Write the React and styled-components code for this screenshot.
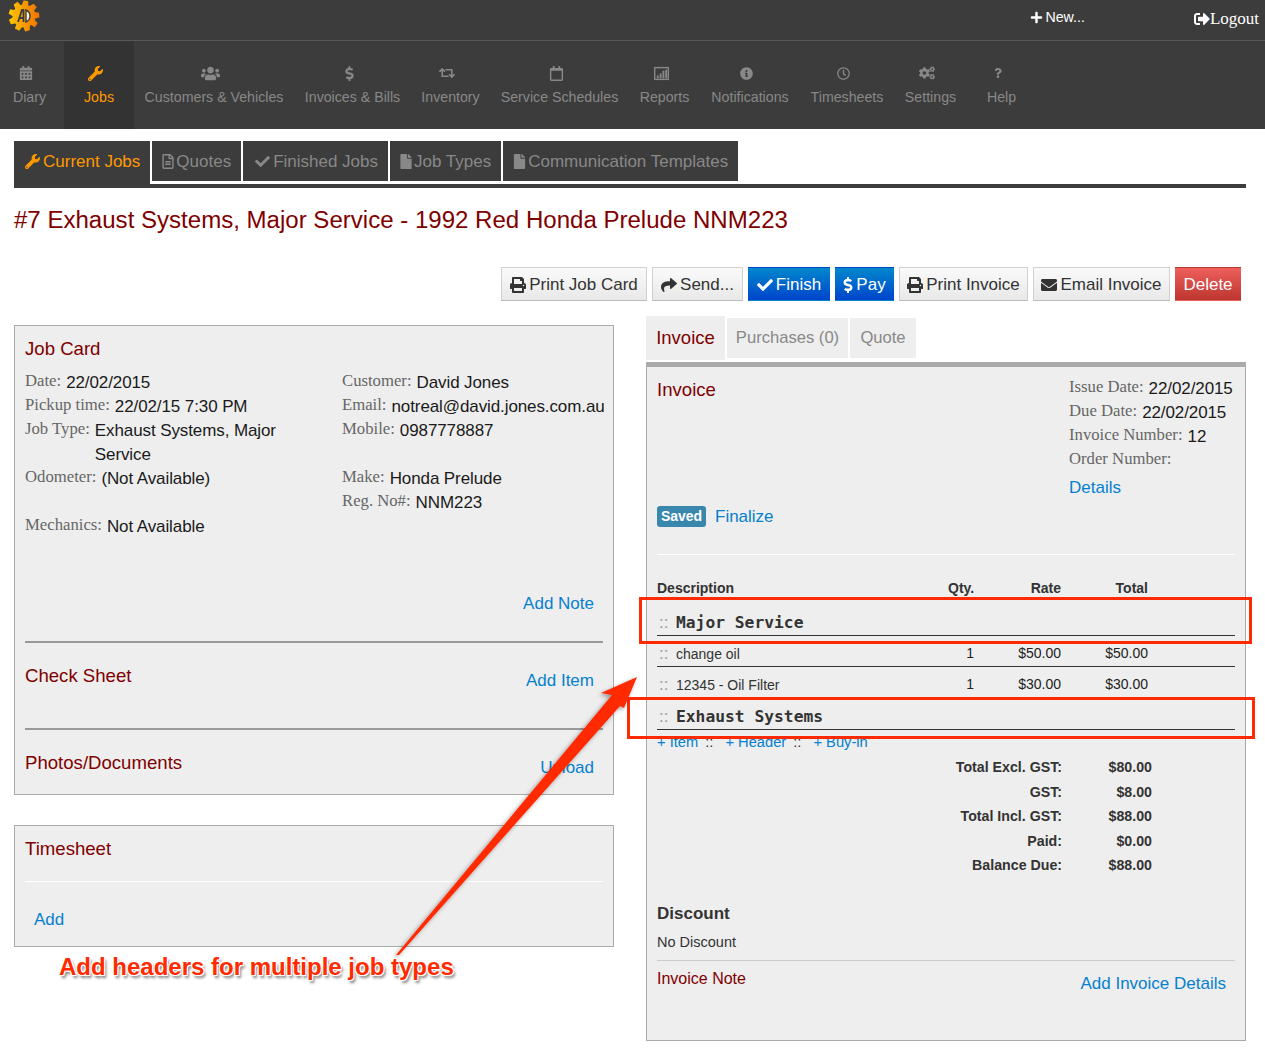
import styled, { createGlobalStyle } from "styled-components";
import {
  FaCalendarAlt, FaWrench, FaUsers, FaDollarSign, FaRetweet, FaRegCalendar,
  FaInfoCircle, FaRegClock, FaCogs, FaQuestion, FaRegFileAlt, FaCheck, FaFile, FaPlus,
  FaSignOutAlt, FaPrint, FaShare, FaEnvelope,
} from "react-icons/fa";

const GlobalStyle = createGlobalStyle`
  body {
    margin: 0;
    background: #fff;
    font-family: "Liberation Sans", Arial, sans-serif;
    color: #222;
  }
`;

const Page = styled.div`
  position: relative;
  width: 1265px;
  height: 1052px;
  overflow: hidden;
`;

const TopBar = styled.div`
  display: flex;
  align-items: center;
  height: 40px;
  padding-left: 8px;
  background: #3c3c3c;
  border-bottom: 1px solid #585858;
`;

const Logo = styled.svg`
  width: 32px;
  height: 32px;
  margin-top: -8px;
`;

const NewLink = styled.a`
  display: flex;
  align-items: center;
  gap: 2px;
  margin: -6px 109px 0 auto;
  color: #fff;
  font-size: 14.2px;
`;

const LogoutLink = styled.a`
  display: flex;
  align-items: center;
  margin-right: 6px;
  margin-top: -2px;
  color: #fff;
  font-family: "Liberation Serif", serif;
  font-size: 17px;
`;

const MainNav = styled.nav`
  display: flex;
  height: 88px;
  background: #3c3c3c;
`;

const NavItem = styled.a`
  display: flex;
  flex-direction: column;
  align-items: center;
  flex: none;
  width: ${(p) => p.$w}px;
  margin-left: ${(p) => p.$ml || 0}px;
  padding-top: 24px;
  box-sizing: border-box;
  white-space: nowrap;
  font-size: 14.2px;
  line-height: 20px;
  color: ${(p) => (p.$active ? "#f90" : "#888")};
  background: ${(p) => (p.$active ? "#333" : "transparent")};
`;

const NavIcon = styled.span`
  display: flex;
  align-items: center;
  justify-content: center;
  height: 16px;
  margin: 0 7px 6px 0;
`;

const Main = styled.main`
  padding: 12px 19px 0 14px;
`;

const SubTabs = styled.div`
  display: flex;
  gap: 2px;
  align-items: flex-start;
  height: 43px;
  border-bottom: 4px solid #3c3c3c;
`;

const SubTab = styled.a`
  display: flex;
  align-items: center;
  gap: 2px;
  height: ${(p) => (p.$active ? 43 : 40)}px;
  padding: 1px 10px ${(p) => (p.$active ? 3 : 0)}px;
  box-sizing: border-box;
  background: #3c3c3c;
  font-size: 17px;
  white-space: nowrap;
  color: ${(p) => (p.$active ? "#f90" : "#888")};
`;

const SubTabIcon = styled.span`
  display: flex;
  justify-content: center;
  width: ${(p) => p.$w}px;
`;

const PageTitle = styled.h1`
  margin: 17px 0 0;
  font-size: 24.06px;
  font-weight: 400;
  line-height: 30px;
  color: #800000;
`;

const ActionBar = styled.div`
  display: flex;
  justify-content: flex-end;
  gap: 5px;
  margin: 32px 5px 0 0;
`;

const ActionButton = styled.a`
  display: flex;
  align-items: center;
  justify-content: center;
  gap: 3px;
  width: ${(p) => p.$w}px;
  height: 34px;
  padding-top: 1px;
  box-sizing: border-box;
  font-size: 17px;
  white-space: nowrap;
  border: 1px solid ${(p) => (p.$tone ? "transparent" : "#d0d0d0")};
  border-bottom-color: ${(p) => (p.$tone ? "transparent" : "#bbb")};
  color: ${(p) => (p.$tone ? "#fff" : "#333")};
  background: ${(p) =>
    p.$tone === "primary"
      ? "linear-gradient(#0088cc, #0044cc)"
      : p.$tone === "danger"
      ? "linear-gradient(#ee5f5b, #bd362f)"
      : "linear-gradient(#fafafa, #e8e8e8)"};
`;

const ButtonIcon = styled.span`
  display: flex;
  justify-content: center;
  width: ${(p) => p.$w}px;
`;

const Columns = styled.div`
  display: grid;
  grid-template-columns: 600px 600px;
  gap: 32px;
  margin-top: 15px;
`;

const LeftColumn = styled.div`
  display: flex;
  flex-direction: column;
  gap: 30px;
  padding-top: 9px;
`;

const Card = styled.section`
  padding: 0 10px;
  background: #eee;
  border: 1px solid #aaa;
`;

const CardTitle = styled.h3`
  margin: 0;
  font-size: 18.6px;
  font-weight: 400;
  line-height: 24px;
  color: #800000;
`;

const Link = styled.a`
  font-size: 17px;
  line-height: 24px;
  color: #0580d0;
`;

const JobTitle = styled(CardTitle)`
  padding-top: 11px;
`;

const InfoGrid = styled.div`
  display: grid;
  grid-template-columns: 317px 1fr;
  margin-top: 9px;
`;

const InfoRow = styled.div`
  display: flex;
  gap: 5px;
  min-height: 24px;
  line-height: 24px;
  white-space: ${(p) => (p.$wrap ? "normal" : "nowrap")};
  margin-bottom: ${(p) => (p.$gap ? 24 : 0)}px;
`;

const Label = styled.span`
  flex: none;
  margin: -1px 0 1px;
  font-family: "Liberation Serif", serif;
  font-size: 16.7px;
  color: #666;
`;

const Value = styled.span`
  margin: 1px 0 -1px;
  font-size: 17px;
  letter-spacing: -0.1px;
  color: #1a1a1a;
  max-width: ${(p) => (p.$free ? "none" : "200px")};
  white-space: inherit;
`;

const NoteBar = styled.div`
  display: flex;
  justify-content: flex-end;
  margin-top: 54px;
  padding-right: 9px;
`;

const SectionRule = styled.hr`
  height: 2px;
  margin: ${(p) => (p.$flush ? 0 : 25)}px 0 0;
  border: 0;
  background: #999;
`;

const SectionRow = styled.div`
  display: flex;
  justify-content: space-between;
  align-items: flex-start;
  padding: 21px 9px 0 0;
  height: ${(p) => p.$h}px;
  box-sizing: border-box;
  ${Link} {
    margin-top: 5px;
  }
`;

const TimesheetRule = styled.hr`
  height: 1px;
  margin: 20px 0 0;
  border: 0;
  background: #fff;
`;

const TimesheetBody = styled.div`
  padding: 26px 0 14px 9px;
`;

const InvoiceTabs = styled.div`
  display: flex;
  align-items: center;
  gap: 2px;
  height: 44px;
`;

const InvoiceTab = styled.a`
  display: flex;
  align-items: center;
  justify-content: center;
  width: ${(p) => p.$w}px;
  height: ${(p) => (p.$active ? 44 : 40)}px;
  background: #eee;
  font-size: ${(p) => (p.$active ? 18.5 : 16.6)}px;
  white-space: nowrap;
  color: ${(p) => (p.$active ? "#800000" : "#888")};
`;

const InvoicePanel = styled.section`
  margin-top: 2px;
  padding: 0 10px 44px;
  background: #eee;
  border: 1px solid #aaa;
  border-top: 5px solid #aaa;
`;

const InvoiceHead = styled.div`
  display: flex;
  justify-content: space-between;
  padding-top: 9px;
`;

const InvoiceTitle = styled(CardTitle)`
  margin-top: 2px;
`;

const InvoiceMeta = styled.div`
  width: 166px;
`;

const DetailsLink = styled(Link)`
  display: block;
  margin-top: 4px;
`;

const StatusRow = styled.div`
  display: flex;
  align-items: center;
  gap: 9px;
  margin-top: 5px;
`;

const Badge = styled.span`
  display: flex;
  align-items: center;
  justify-content: center;
  width: 49px;
  height: 21px;
  margin-top: -2px;
  border-radius: 3px;
  background: #3a87ad;
  color: #fff;
  font-size: 14px;
  font-weight: 700;
`;

const LightRule = styled.hr`
  height: 1px;
  margin: 25px 0 0;
  border: 0;
  background: #fff;
`;

const LineGrid = styled.div`
  display: grid;
  grid-template-columns: 291px 26px 87px 87px 1fr;
  font-size: 14px;
  line-height: 20px;
  padding: ${(p) => p.$pad || "0"};
  border-bottom: ${(p) => (p.$rule ? "1px solid #333" : "0")};
  & > span:nth-child(n + 2) {
    text-align: right;
  }
`;

const HeadGrid = styled(LineGrid)`
  margin-top: 23px;
  font-weight: 700;
  color: #333;
`;

const Handle = styled.span`
  display: inline-block;
  width: 19px;
  padding-left: 2px;
  box-sizing: border-box;
  color: #999;
  font-family: "Liberation Sans", sans-serif;
  font-size: 17px;
  font-weight: 400;
`;

const GroupName = styled.span`
  font-family: "DejaVu Sans Mono", monospace;
  font-size: 16.3px;
  font-weight: 700;
  color: #333;
  white-space: nowrap;
`;

const ItemName = styled.span`
  padding-top: 1px;
  color: #333;
  white-space: nowrap;
`;

const AddBar = styled.div`
  margin-top: 2px;
  font-size: 14.7px;
  line-height: 20px;
  color: #333;
  white-space: nowrap;
  a {
    color: #0580d0;
  }
`;

const AddSeparator = styled.span`
  margin: 0 12px 0 7px;
`;

const Totals = styled.div`
  display: grid;
  grid-template-columns: 405px 90px;
  grid-auto-rows: 24.5px;
  align-items: center;
  margin-top: 3px;
  font-size: 14.2px;
  font-weight: 700;
  color: #333;
  span {
    text-align: right;
  }
`;

const DiscountTitle = styled.h4`
  margin: 24px 0 0;
  font-size: 17px;
  line-height: 24px;
  color: #333;
`;

const DiscountText = styled.div`
  margin-top: 6px;
  font-size: 14.5px;
  line-height: 20px;
  color: #333;
`;

const GreyRule = styled.hr`
  height: 1px;
  margin: 8px 0 0;
  border: 0;
  background: #ccc;
`;

const NoteRow = styled.div`
  display: flex;
  justify-content: space-between;
  align-items: flex-start;
  padding: 8px 9px 0 0;
  ${Link} {
    margin-top: 3px;
  }
`;

const NoteTitle = styled.span`
  font-size: 16px;
  line-height: 20px;
  color: #800000;
`;

const Callout = styled.div`
  position: absolute;
  left: ${(p) => p.$x}px;
  top: ${(p) => p.$y}px;
  width: ${(p) => p.$w}px;
  height: ${(p) => p.$h}px;
  box-sizing: border-box;
  border: 3px solid #ff2a00;
`;

const ArrowLayer = styled.svg`
  position: absolute;
  left: 0;
  top: 0;
  pointer-events: none;
`;

const CalloutText = styled.div`
  position: absolute;
  left: 59px;
  top: 951px;
  font-size: 24px;
  font-weight: 700;
  line-height: 32px;
  color: #ff2a00;
  white-space: nowrap;
  text-shadow: 1px 1px 0 #fff, -1px -1px 0 #fff, 1px -1px 0 #fff, -1px 1px 0 #fff, 2px 3px 3px #777;
`;

const ReportsIcon = ({ size }) => (
  <svg width={size} height={size} viewBox="0 0 16 16">
    <rect x="0.75" y="1.75" width="14.5" height="12.5" fill="none" stroke="currentColor" strokeWidth="1.5" />
    <path d="M3 10h2v3H3zM6 8h2v5H6zM9 5h2v8H9zM12 4h2v9h-2z" fill="currentColor" />
  </svg>
);

const navItems = [
  { label: "Diary", icon: FaCalendarAlt, w: 59, size: 14 },
  { label: "Jobs", icon: FaWrench, w: 70, ml: 5, active: true, size: 15 },
  { label: "Customers & Vehicles", icon: FaUsers, w: 160, size: 19 },
  { label: "Invoices & Bills", icon: FaDollarSign, w: 117, size: 15 },
  { label: "Inventory", icon: FaRetweet, w: 79, size: 16 },
  { label: "Service Schedules", icon: FaRegCalendar, w: 139, size: 15 },
  { label: "Reports", icon: ReportsIcon, w: 71, size: 15 },
  { label: "Notifications", icon: FaInfoCircle, w: 100, size: 13 },
  { label: "Timesheets", icon: FaRegClock, w: 94, size: 13 },
  { label: "Settings", icon: FaCogs, w: 73, size: 16 },
  { label: "Help", icon: FaQuestion, w: 69, size: 10 },
];

const subTabs = [
  { label: "Current Jobs", icon: FaWrench, active: true, iconW: 17 },
  { label: "Quotes", icon: FaRegFileAlt, iconW: 12 },
  { label: "Finished Jobs", icon: FaCheck, iconW: 18 },
  { label: "Job Types", icon: FaFile, iconW: 12 },
  { label: "Communication Templates", icon: FaFile, iconW: 13 },
];

const actions = [
  { label: "Print Job Card", icon: FaPrint, w: 146, iconW: 16 },
  { label: "Send...", icon: FaShare, w: 91, iconW: 16 },
  { label: "Finish", icon: FaCheck, tone: "primary", w: 82, iconW: 16 },
  { label: "Pay", icon: FaDollarSign, tone: "primary", w: 59, iconW: 10 },
  { label: "Print Invoice", icon: FaPrint, w: 129, iconW: 16 },
  { label: "Email Invoice", icon: FaEnvelope, w: 137, iconW: 16 },
  { label: "Delete", tone: "danger", w: 66 },
];

const totals = [
  ["Total Excl. GST:", "$80.00"],
  ["GST:", "$8.00"],
  ["Total Incl. GST:", "$88.00"],
  ["Paid:", "$0.00"],
  ["Balance Due:", "$88.00"],
];

const gearPath = () => {
  const teeth = 9;
  const pts = [];
  for (let i = 0; i < teeth; i++) {
    const a = (i / teeth) * Math.PI * 2;
    const s = (Math.PI * 2) / teeth;
    [[11.5, -0.5], [15.5, -0.3], [15.5, 0.15], [11.5, 0.3]].forEach(([r, k]) => {
      const t = a + k * s;
      pts.push(`${(16 + r * Math.cos(t)).toFixed(2)},${(16 + r * Math.sin(t)).toFixed(2)}`);
    });
  }
  return `M${pts.join("L")}Z`;
};

const App = () => {
  return (
    <Page>
      <GlobalStyle />
      <TopBar>
        <Logo viewBox="0 0 32 32">
          <defs>
            <linearGradient id="gear" x1="0" x2="1" y1="0" y2="0">
              <stop offset="0" stopColor="#ffc800" />
              <stop offset="1" stopColor="#f27000" />
            </linearGradient>
          </defs>
          <path d={gearPath()} fill="url(#gear)" />
          <path d="M10 22 L14 10 L15.5 10 L15.5 22 M11.5 18 L15 18" fill="none" stroke="#3c3c3c" strokeWidth="1.8" />
          <path d="M18 10 A6.5 6.5 0 0 1 18 22 Z" fill="#f6f0e0" stroke="#3c3c3c" strokeWidth="1.4" />
        </Logo>
        <NewLink>
          <FaPlus size={13} />
          New...
        </NewLink>
        <LogoutLink>
          <FaSignOutAlt size={16} />
          Logout
        </LogoutLink>
      </TopBar>
      <MainNav>
        {navItems.map(({ label, icon: Icon, w, ml, active, size }) => (
          <NavItem key={label} $w={w} $ml={ml} $active={active}>
            <NavIcon>
              <Icon size={size} />
            </NavIcon>
            {label}
          </NavItem>
        ))}
      </MainNav>
      <Main>
        <SubTabs>
          {subTabs.map(({ label, icon: Icon, active, iconW }) => (
            <SubTab key={label} $active={active}>
              <SubTabIcon $w={iconW}>
                <Icon size={15} />
              </SubTabIcon>
              {label}
            </SubTab>
          ))}
        </SubTabs>
        <PageTitle>#7 Exhaust Systems, Major Service - 1992 Red Honda Prelude NNM223</PageTitle>
        <ActionBar>
          {actions.map(({ label, icon: Icon, tone, w, iconW }) => (
            <ActionButton key={label} $tone={tone} $w={w}>
              {Icon && (
                <ButtonIcon $w={iconW}>
                  <Icon size={16} />
                </ButtonIcon>
              )}
              {label}
            </ActionButton>
          ))}
        </ActionBar>
        <Columns>
          <LeftColumn>
            <Card>
              <JobTitle>Job Card</JobTitle>
              <InfoGrid>
                <div>
                  <InfoRow>
                    <Label>Date:</Label>
                    <Value>22/02/2015</Value>
                  </InfoRow>
                  <InfoRow>
                    <Label>Pickup time:</Label>
                    <Value>22/02/15 7:30 PM</Value>
                  </InfoRow>
                  <InfoRow $wrap>
                    <Label>Job Type:</Label>
                    <Value>Exhaust Systems, Major Service</Value>
                  </InfoRow>
                  <InfoRow $gap>
                    <Label>Odometer:</Label>
                    <Value>(Not Available)</Value>
                  </InfoRow>
                  <InfoRow>
                    <Label>Mechanics:</Label>
                    <Value>Not Available</Value>
                  </InfoRow>
                </div>
                <div>
                  <InfoRow>
                    <Label>Customer:</Label>
                    <Value $free>David Jones</Value>
                  </InfoRow>
                  <InfoRow>
                    <Label>Email:</Label>
                    <Value $free>notreal@david.jones.com.au</Value>
                  </InfoRow>
                  <InfoRow $gap>
                    <Label>Mobile:</Label>
                    <Value $free>0987778887</Value>
                  </InfoRow>
                  <InfoRow>
                    <Label>Make:</Label>
                    <Value $free>Honda Prelude</Value>
                  </InfoRow>
                  <InfoRow>
                    <Label>Reg. No#:</Label>
                    <Value $free>NNM223</Value>
                  </InfoRow>
                </div>
              </InfoGrid>
              <NoteBar>
                <Link>Add Note</Link>
              </NoteBar>
              <SectionRule />
              <SectionRow $h={85}>
                <CardTitle>Check Sheet</CardTitle>
                <Link>Add Item</Link>
              </SectionRow>
              <SectionRule $flush />
              <SectionRow $h={64}>
                <CardTitle>Photos/Documents</CardTitle>
                <Link>Upload</Link>
              </SectionRow>
            </Card>
            <Card>
              <JobTitle>Timesheet</JobTitle>
              <TimesheetRule />
              <TimesheetBody>
                <Link>Add</Link>
              </TimesheetBody>
            </Card>
          </LeftColumn>
          <div>
            <InvoiceTabs>
              <InvoiceTab $active $w={79}>Invoice</InvoiceTab>
              <InvoiceTab $w={121}>Purchases (0)</InvoiceTab>
              <InvoiceTab $w={66}>Quote</InvoiceTab>
            </InvoiceTabs>
            <InvoicePanel>
              <InvoiceHead>
                <InvoiceTitle>Invoice</InvoiceTitle>
                <InvoiceMeta>
                  <InfoRow>
                    <Label>Issue Date:</Label>
                    <Value $free>22/02/2015</Value>
                  </InfoRow>
                  <InfoRow>
                    <Label>Due Date:</Label>
                    <Value $free>22/02/2015</Value>
                  </InfoRow>
                  <InfoRow>
                    <Label>Invoice Number:</Label>
                    <Value $free>12</Value>
                  </InfoRow>
                  <InfoRow>
                    <Label>Order Number:</Label>
                  </InfoRow>
                  <DetailsLink>Details</DetailsLink>
                </InvoiceMeta>
              </InvoiceHead>
              <StatusRow>
                <Badge>Saved</Badge>
                <Link>Finalize</Link>
              </StatusRow>
              <LightRule />
              <HeadGrid>
                <span>Description</span>
                <span>Qty.</span>
                <span>Rate</span>
                <span>Total</span>
              </HeadGrid>
              <LineGrid $rule $pad="15px 0 2px">
                <GroupName>
                  <Handle>::</Handle>Major Service
                </GroupName>
              </LineGrid>
              <LineGrid $rule $pad="7px 0 2px">
                <ItemName>
                  <Handle>::</Handle>change oil
                </ItemName>
                <span>1</span>
                <span>$50.00</span>
                <span>$50.00</span>
              </LineGrid>
              <LineGrid $pad="7px 0 2px">
                <ItemName>
                  <Handle>::</Handle>12345 - Oil Filter
                </ItemName>
                <span>1</span>
                <span>$30.00</span>
                <span>$30.00</span>
              </LineGrid>
              <LineGrid $rule $pad="10px 0 2px">
                <GroupName>
                  <Handle>::</Handle>Exhaust Systems
                </GroupName>
              </LineGrid>
              <AddBar>
                <a>+ Item</a>
                <AddSeparator>::</AddSeparator>
                <a>+ Header</a>
                <AddSeparator>::</AddSeparator>
                <a>+ Buy-in</a>
              </AddBar>
              <Totals>
                {totals.flatMap(([name, amount]) => [
                  <span key={name}>{name}</span>,
                  <span key={`${name}-amount`}>{amount}</span>,
                ])}
              </Totals>
              <DiscountTitle>Discount</DiscountTitle>
              <DiscountText>No Discount</DiscountText>
              <GreyRule />
              <NoteRow>
                <NoteTitle>Invoice Note</NoteTitle>
                <Link>Add Invoice Details</Link>
              </NoteRow>
            </InvoicePanel>
          </div>
        </Columns>
      </Main>
      <Callout $x={639} $y={597} $w={613} $h={47} />
      <Callout $x={627} $y={697} $w={628} $h={42} />
      <ArrowLayer width="1265" height="1052" viewBox="0 0 1265 1052">
        <defs>
          <filter id="arrowShadow" x="-20%" y="-20%" width="140%" height="140%">
            <feDropShadow dx="-2" dy="2" stdDeviation="2" floodColor="#000" floodOpacity="0.4" />
          </filter>
        </defs>
        <path d="M637 677 L624 708 L620 706 L399 955 L396 955 L612 695 L601 693 Z" fill="#ff2a00" filter="url(#arrowShadow)" />
      </ArrowLayer>
      <CalloutText>Add headers for multiple job types</CalloutText>
    </Page>
  );
};

export default App;
